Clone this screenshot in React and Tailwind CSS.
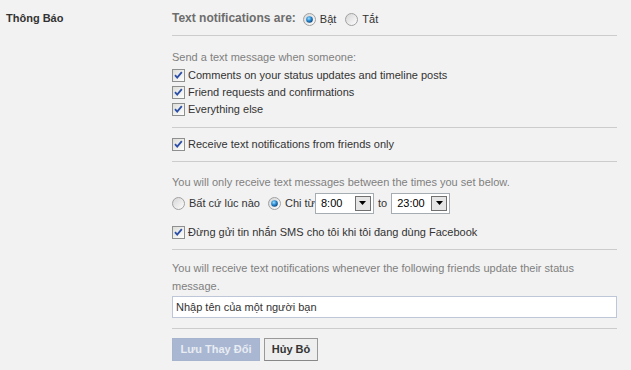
import React from "react";

function Checkbox() {
  return (
    <svg width="13" height="13" viewBox="0 0 13 13" className="shrink-0">
      <defs>
        <linearGradient id="cbg" x1="0" y1="0" x2="1" y2="1">
          <stop offset="0" stopColor="#dcdcd7" />
          <stop offset="1" stopColor="#ffffff" />
        </linearGradient>
      </defs>
      <rect x="0.5" y="0.5" width="12" height="12" fill="url(#cbg)" stroke="#8e8f8f" />
      <path d="M3 6.2 L5.2 8.6 L9.8 3.2" fill="none" stroke="#2b4fa8" strokeWidth="1.8" />
    </svg>
  );
}

function Radio({ checked }) {
  return (
    <svg width="13" height="13" viewBox="0 0 13 13" className="shrink-0">
      <defs>
        <linearGradient id="rbg" x1="0" y1="0" x2="1" y2="1">
          <stop offset="0" stopColor="#d4d4d4" />
          <stop offset="1" stopColor="#ffffff" />
        </linearGradient>
        <radialGradient id="rdot" cx="0.4" cy="0.35" r="0.7">
          <stop offset="0" stopColor="#9fe0ff" />
          <stop offset="0.5" stopColor="#2a8bd1" />
          <stop offset="1" stopColor="#0b3e75" />
        </radialGradient>
      </defs>
      <circle cx="6.5" cy="6.5" r="6" fill="url(#rbg)" stroke="#a0a0a0" />
      {checked && <circle cx="6.5" cy="6.5" r="3.3" fill="url(#rdot)" />}
    </svg>
  );
}

function Select({ value }) {
  return (
    <div className="flex h-[21px] w-[59px] items-center justify-between border border-[#a5acb2] bg-white pl-[5px] pr-[2px] text-[#000]">
      <span>{value}</span>
      <span className="flex h-[15px] w-[16px] items-center justify-center border border-[#707070] bg-[#e5e5e5]">
        <svg width="7" height="4" viewBox="0 0 7 4">
          <path d="M0 0 H7 L3.5 4 Z" fill="#000" />
        </svg>
      </span>
    </div>
  );
}

function CheckRow({ children }) {
  return (
    <div className="flex h-[17px] items-center gap-[3px] text-[#333]">
      <Checkbox />
      <span>{children}</span>
    </div>
  );
}

export default function App() {
  return (
    <div
      className="flex h-[370px] w-[631px] bg-[#f2f2f2] text-[11px] text-[#333]"
      style={{ fontFamily: '"Liberation Sans", Arial, sans-serif' }}
    >
      {/* Label column */}
      <div className="w-[172px] shrink-0 pl-[6px] pt-[10px]">
        <div className="h-[16px] leading-[16px] font-bold">Thông Báo</div>
      </div>

      {/* Settings column */}
      <div className="w-[445px] shrink-0">
        <div className="flex h-[36px] items-start gap-[4px] border-b border-[#cccccc] pt-[10px] leading-[16px]">
          <span className="mr-[3px] text-[12px] font-bold text-[#6d6d6d]">Text notifications are:</span>
          <span className="mt-[1px] flex items-center gap-[4px]">
            <Radio checked />
            <span>Bật</span>
          </span>
          <span className="ml-[5px] mt-[1px] flex items-center gap-[4px]">
            <Radio />
            <span>Tắt</span>
          </span>
        </div>

        <div className="border-b border-[#cccccc] pt-[13px] pb-[9px]">
          <div className="h-[18px] leading-[16px] text-[#808080]">Send a text message when someone:</div>
          <CheckRow>Comments on your status updates and timeline posts</CheckRow>
          <CheckRow>Friend requests and confirmations</CheckRow>
          <CheckRow>Everything else</CheckRow>
        </div>

        <div className="border-b border-[#cccccc] pt-[8px] pb-[8px]">
          <CheckRow>Receive text notifications from friends only</CheckRow>
        </div>

        <div className="border-b border-[#cccccc] pt-[12px] pb-[8px]">
          <div className="h-[16px] leading-[16px] text-[#808080]">
            You will only receive text messages between the times you set below.
          </div>
          <div className="mt-[2px] flex h-[22px] items-center">
            <Radio />
            <span className="ml-[4px]">Bất cứ lúc nào</span>
            <span className="ml-[8px]"><Radio checked /></span>
            <span className="ml-[4px]">Chi từ</span>
            <Select value="8:00" />
            <span className="mx-[4px]">to</span>
            <Select value="23:00" />
          </div>
          <div className="mt-[10px]">
            <CheckRow>Đừng gửi tin nhắn SMS cho tôi khi tôi đang dùng Facebook</CheckRow>
          </div>
        </div>

        <div className="border-b border-[#cccccc] pt-[9px] pb-[10px]">
          <p className="leading-[18px] text-[#808080]">
            You will receive text notifications whenever the following friends update their status message.
          </p>
          <div className="mt-[1px] flex h-[22px] items-center border border-[#bdc7d8] bg-white px-[3px] text-[#333]">
            Nhập tên của một người bạn
          </div>
        </div>

        <div className="mt-[9px] flex gap-[4px]">
          <button className="h-[23px] w-[88px] border border-[#a7b4cd] bg-[#a9b7d2] text-[11px] font-bold text-[#e8ecf3]">
            Lưu Thay Đổi
          </button>
          <button className="h-[23px] w-[54px] border border-[#999999] border-b-[#888888] bg-[#eeeeee] text-[11px] font-bold text-[#333]">
            Hủy Bỏ
          </button>
        </div>
      </div>
    </div>
  );
}
